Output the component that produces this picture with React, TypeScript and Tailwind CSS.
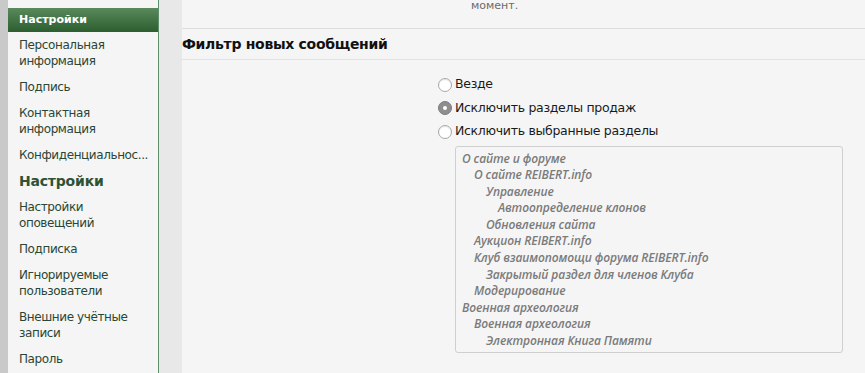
import React from 'react';

const navItems: { label: string; active?: boolean }[] = [
  { label: 'Персональная информация' },
  { label: 'Подпись' },
  { label: 'Контактная информация' },
  { label: 'Конфиденциальнос...' },
  { label: 'Настройки', active: true },
  { label: 'Настройки оповещений' },
  { label: 'Подписка' },
  { label: 'Игнорируемые пользователи' },
  { label: 'Внешние учётные записи' },
  { label: 'Пароль' },
];

const nodes: { label: string; level: number }[] = [
  { label: 'О сайте и форуме', level: 0 },
  { label: 'О сайте REIBERT.info', level: 1 },
  { label: 'Управление', level: 2 },
  { label: 'Автоопределение клонов', level: 3 },
  { label: 'Обновления сайта', level: 2 },
  { label: 'Аукцион REIBERT.info', level: 1 },
  { label: 'Клуб взаимопомощи форума REIBERT.info', level: 1 },
  { label: 'Закрытый раздел для членов Клуба', level: 2 },
  { label: 'Модерирование', level: 1 },
  { label: 'Военная археология', level: 0 },
  { label: 'Военная археология', level: 1 },
  { label: 'Электронная Книга Памяти', level: 2 },
];

const indent = ['pl-0', 'pl-3', 'pl-6', 'pl-9'];

function Radio({ checked, label }: { checked?: boolean; label: string }) {
  return (
    <label className="flex items-center gap-[3px] h-[23.5px]">
      {checked ? (
        <span className="w-[14px] h-[14px] rounded-full bg-[#8e8e8e] border border-[#7d7d7d] flex items-center justify-center">
          <span className="w-[4px] h-[4px] rounded-full bg-white" />
        </span>
      ) : (
        <span className="w-[14px] h-[14px] rounded-full bg-white border border-[#a8a8a8] shadow-[inset_0_1px_1px_rgba(0,0,0,0.1)]" />
      )}
      <span className="text-[12.5px] tracking-[-0.3px] text-[#1a1a1a]">{label}</span>
    </label>
  );
}

export default function App() {
  return (
    <div className="flex h-[373px] w-[865px] overflow-hidden bg-[#f5f5f5] font-['DejaVu_Sans',sans-serif]">
      <div className="w-[8px] bg-[#c9c9c9]" />
      <aside className="w-[151px] bg-[#f5f5f5] border-r border-[#5e8f6c] pt-[8px]">
        <div className="h-[24px] bg-gradient-to-b from-[#5a8a5c] to-[#2c5e30] text-white font-bold text-[11px] pl-[11px] flex items-center">
          Настройки
        </div>
        <ul>
          {navItems.map((item, i) => (
            <li
              key={i}
              className={
                item.active
                  ? 'pl-[11px] pr-2 py-[5px] leading-[16px] text-[14px] tracking-[-0.2px] font-bold text-[#2e5236]'
                  : 'pl-[11px] pr-2 py-[5px] leading-[16px] text-[12px] tracking-[-0.4px] text-[#2b4634]'
              }
            >
              {item.label}
            </li>
          ))}
        </ul>
      </aside>
      <div className="w-[23px] bg-[#e8e8e8]" />
      <main className="flex-1 bg-[#f5f5f5]">
        <div className="h-[29px] border-b border-[#dedede] pl-[289px]">
          <div className="text-[11px] leading-[11px] text-[#6b6b6b]">момент.</div>
        </div>
        <div className="h-[31px] border-b border-[#e2e2e2] flex items-center">
          <h2 className="font-bold text-[14px] tracking-[-0.3px] text-[#111]">Фильтр новых сообщений</h2>
        </div>
        <div className="pl-[256px] pt-[13px]">
          <Radio label="Везде" />
          <Radio checked label="Исключить разделы продаж" />
          <Radio label="Исключить выбранные разделы" />
          <div className="ml-[17px] mt-[2px] w-[388px] h-[207px] border border-[#cfcfcf] rounded-[3px] pl-[6px] pt-[4px]">
            {nodes.map((n, i) => (
              <div
                key={i}
                className={`${indent[n.level]} italic text-[12px] leading-[16.6px] tracking-[-0.1px] text-[#7b7b7b] font-['Open_Sans',sans-serif] font-semibold`}
              >
                {n.label}
              </div>
            ))}
          </div>
          <div className="h-[20px]" />
        </div>
        <div className="border-b border-[#e0e0e0]" />
      </main>
    </div>
  );
}
